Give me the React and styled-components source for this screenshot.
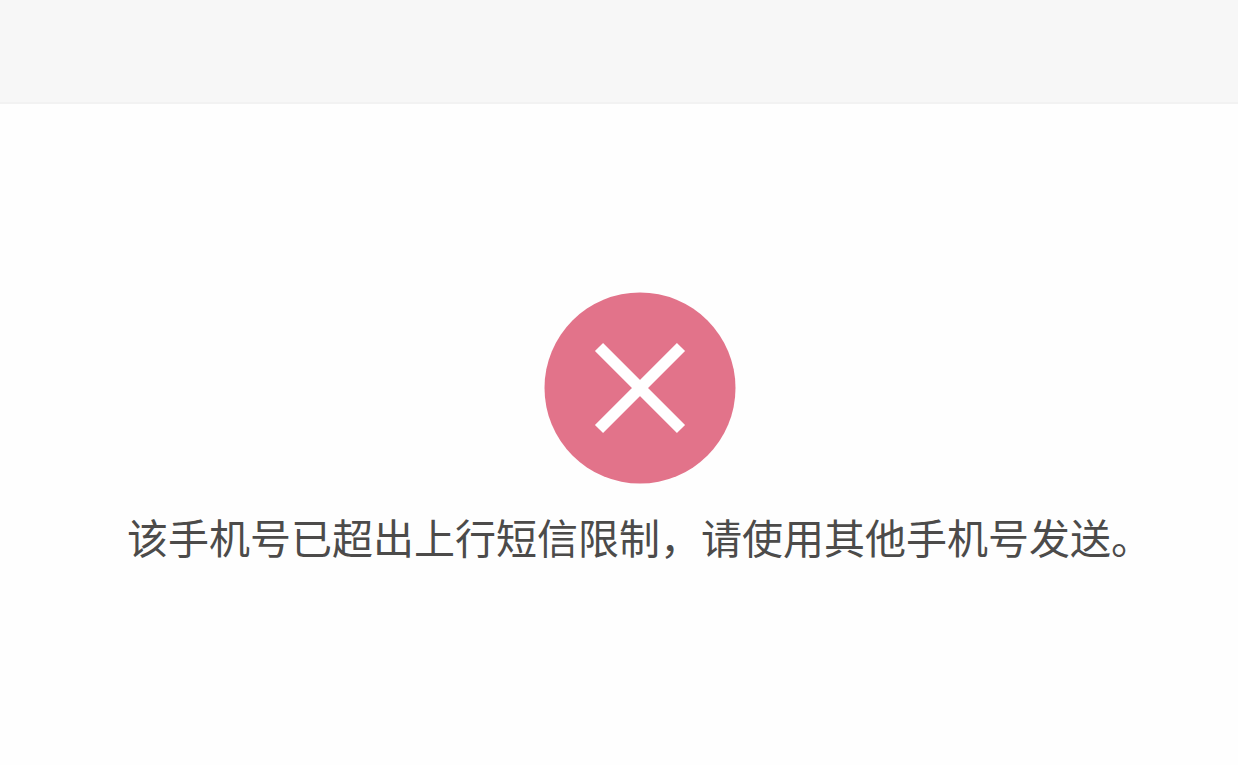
import styled, { createGlobalStyle } from "styled-components"

const GlobalStyle = createGlobalStyle`
    body {
        margin: 0;
        background-color: #fefefe;
        font-family: "Noto Sans CJK SC", sans-serif;
    }
`;

const Container = styled.div`
    min-height: 100vh;
    display: flex;
    flex-direction: column;
`;

const Header = styled.header`
    height: 102px;
    background-color: #f7f7f7;
    border-bottom: 2px solid #f2f2f2;
`;

const Result = styled.main`
    display: flex;
    flex-direction: column;
    align-items: center;
    gap: 22px;
    padding: 188px 0 40px 41px;
`;

const ErrorIcon = styled.svg`
    width: 192px;
    height: 192px;
`;

const Message = styled.p`
    margin: 0;
    font-size: 41px;
    font-weight: 400;
    line-height: 60px;
    color: #4c4b4a;
`;

const App = () => {
  return (
    <>
      <GlobalStyle />
      <Container>
        <Header />
        <Result>
          <ErrorIcon viewBox="0 0 192 192" role="img" aria-label="错误">
            <circle cx="96" cy="96" r="95.5" fill="#e2738a" />
            <path d="M55 55L137 137M137 55L55 137" stroke="#fff" strokeWidth="11.5" />
          </ErrorIcon>
          <Message>该手机号已超出上行短信限制，请使用其他手机号发送。</Message>
        </Result>
      </Container>
    </>
  )
}

export default App
